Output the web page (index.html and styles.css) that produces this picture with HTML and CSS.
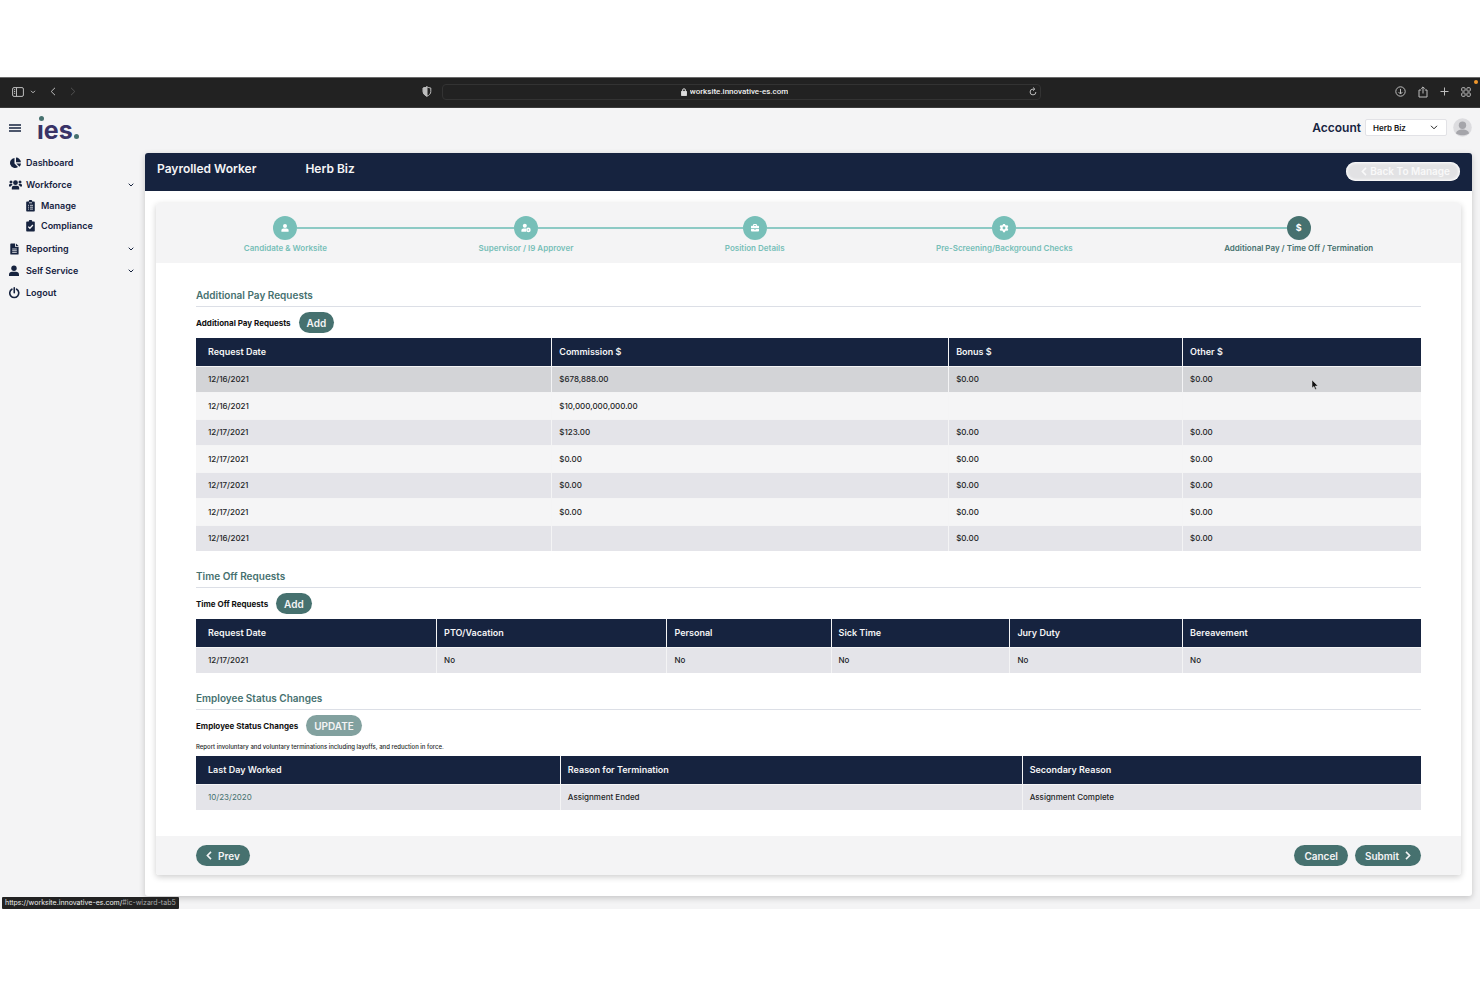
FILE: index.html
```html
<!DOCTYPE html>
<html lang="en">
<head>
<meta charset="utf-8">
<title>Payrolled Worker – Herb Biz</title>
<link rel="stylesheet" href="styles.css">
</head>
<body>
<div class="window">
  <header class="browser">
    <div class="browser-side">
      <button class="tool" aria-label="Show sidebar"><svg width="12" height="10" viewBox="0 0 12 10"><rect x=".6" y=".6" width="10.8" height="8.8" rx="1.4"/><path d="M4.5 .6v8.800M2 2.700h1.200M2 4.500h1.200M2 6.300h1.200"/></svg></button>
      <button class="tool tool-menu" aria-label="Tab groups"><svg width="6" height="4" viewBox="0 0 6 4"><path d="M1 .8l2 2 2-2"/></svg></button>
      <button class="tool tool-back" aria-label="Back"><svg width="6" height="9" viewBox="0 0 6 9"><path d="M5 .8L1.200 4.500 5 8.200"/></svg></button>
      <button class="tool tool-forward" aria-label="Forward" disabled><svg width="6" height="9" viewBox="0 0 6 9"><path d="M1 .8l3.800 3.700L1 8.200"/></svg></button>
      <button class="tool tool-shield" aria-label="Privacy report"><svg width="10" height="11" viewBox="0 0 10 11"><path d="M5 .8C3.800 1.600 2.600 1.900 1.200 2v3.500C1.200 7.800 2.800 9.300 5 10.200 7.200 9.300 8.800 7.800 8.800 5.500V2C7.400 1.900 6.200 1.600 5 .8z"/><path class="solid" d="M5 .8C3.800 1.600 2.600 1.900 1.200 2v3.500C1.200 7.800 2.800 9.300 5 10.200z"/></svg></button>
    </div>
    <label class="address">
      <svg class="lock" width="6" height="8" viewBox="0 0 6 8"><rect class="solid" x=".3" y="3.300" width="5.400" height="4.300" rx=".7"/><path d="M1.500 3.500V2.300a1.500 1.500 0 013 0v1.200"/></svg>
      <input class="address-input" type="text" value="worksite.innovative-es.com" size="26" aria-label="Address">
      <button class="tool reload" aria-label="Reload"><svg width="8" height="9" viewBox="0 0 8 9"><path d="M6.900 5A2.900 2.900 0 114 2.100h1.500M4.100.5l1.700 1.600-1.700 1.600"/></svg></button>
    </label>
    <div class="browser-side browser-end">
      <button class="tool" aria-label="Downloads"><svg width="11" height="11" viewBox="0 0 11 11"><circle cx="5.500" cy="5.500" r="4.700"/><path d="M5.500 2.900v5M3.600 6.100l1.900 1.900 1.900-1.900"/></svg></button>
      <button class="tool" aria-label="Share"><svg width="10" height="12" viewBox="0 0 10 12"><path d="M3.200 4H1v7h8V4H6.800M5 7.500V1M3.200 2.700L5 .9l1.800 1.800"/></svg></button>
      <button class="tool" aria-label="New tab"><svg width="9" height="9" viewBox="0 0 9 9"><path d="M4.500.5v8M.5 4.500h8"/></svg></button>
      <button class="tool" aria-label="Tab overview"><svg width="10" height="10" viewBox="0 0 10 10"><rect x=".7" y=".7" width="3.400" height="3.400" rx=".8"/><rect x="5.900" y=".7" width="3.400" height="3.400" rx=".8"/><rect x=".7" y="5.900" width="3.400" height="3.400" rx=".8"/><rect x="5.900" y="5.900" width="3.400" height="3.400" rx=".8"/></svg></button>
    </div>
    <span class="recording"></span>
  </header>

  <div class="app">
    <header class="topbar">
      <button class="burger" aria-label="Toggle menu"><svg width="12" height="8" viewBox="0 0 12 8"><path d="M0 1h12M0 4h12M0 7h12"/></svg></button>
      <a class="logo" href="#" aria-label="ies">&#305;es<span class="logo-stop"></span><span class="logo-dot"></span></a>
      <label class="account-label" for="account">Account</label>
      <span class="select-wrap">
        <select id="account" class="account"><option>Herb Biz</option></select>
        <svg class="select-arrow" width="8" height="5" viewBox="0 0 8 5"><path d="M1 .8l3 3 3-3"/></svg>
      </span>
      <svg class="avatar" width="19" height="19" viewBox="0 0 19 19"><circle cx="9.500" cy="9.500" r="9.300" fill="#dcdcdf"/><circle cx="9.500" cy="7.200" r="3.700" fill="#a5a5aa"/><path d="M3 15.500c.5-3 3-4 6.500-4s6 1 6.500 4c-3.500 2.400-9.500 2.400-13 0z" fill="#a5a5aa"/></svg>
    </header>

    <nav class="sidebar">
      <a class="nav-item" href="#"><svg class="nav-icon" viewBox="0 0 13 12"><path d="M5.500 1A5 5 0 109 10L5.500 6.500z"/><path d="M7 .5v4.800h4.900A5 5 0 007 .5z"/><path d="M7.300 6.500l3.200 3.200a5 5 0 001.500-3.200z"/></svg>Dashboard</a>
      <a class="nav-item" href="#"><svg class="nav-icon" viewBox="0 0 13 12"><circle cx="6.500" cy="3.700" r="2.400"/><circle cx="2" cy="3" r="1.500"/><circle cx="11" cy="3" r="1.500"/><path d="M2.800 10.500V9c0-1.500 1-2.300 2.200-2.300h3c1.200 0 2.200.8 2.200 2.300v1.500zM0 7.500V6.300C0 5.500.6 5 1.400 5h1.400l.9 1c-1 .3-1.500.8-1.700 1.500zM13 7.500V6.300c0-.8-.6-1.300-1.400-1.300h-1.400l-.9 1c1 .3 1.500.8 1.700 1.500z"/></svg>Workforce<svg class="nav-arrow" viewBox="0 0 6 4"><path d="M.7.7L3 3 5.300.7"/></svg></a>
      <a class="nav-item nav-sub" href="#"><svg class="nav-icon" viewBox="0 0 13 12"><path d="M3.200 1.500h1.600a1.700 1.700 0 013.400 0h1.600c.6 0 1 .4 1 1v8c0 .6-.4 1-1 1H3.200c-.6 0-1-.4-1-1v-8c0-.6.400-1 1-1z"/><path class="cut" d="M5 2.800h3M4 5.300h1M6 5.300h3M4 7.200h1M6 7.200h3M4 9.100h1M6 9.100h3"/></svg>Manage</a>
      <a class="nav-item nav-sub" href="#"><svg class="nav-icon" viewBox="0 0 13 12"><path d="M3.200 1.500h1.600a1.700 1.700 0 013.400 0h1.600c.6 0 1 .4 1 1v8c0 .6-.4 1-1 1H3.200c-.6 0-1-.4-1-1v-8c0-.6.400-1 1-1z"/><path class="cut cut-bold" d="M4.300 6.600l1.600 1.700 3-3.300"/></svg>Compliance</a>
      <a class="nav-item nav-after" href="#"><svg class="nav-icon" viewBox="0 0 13 12"><path d="M2 .5h4v3.300h3.600v7.200c0 .4-.3.600-.6.600H2c-.4 0-.7-.3-.7-.7V1.200c0-.4.300-.7.700-.7z"/><path d="M6.900.6l2.700 2.500H6.900z"/><path class="cut" d="M3.200 6h4.600M3.200 7.700h4.600M3.200 9.400h4.600"/></svg>Reporting<svg class="nav-arrow" viewBox="0 0 6 4"><path d="M.7.7L3 3 5.300.7"/></svg></a>
      <a class="nav-item" href="#"><svg class="nav-icon" viewBox="0 0 13 12"><circle cx="5" cy="3.200" r="2.700"/><path d="M0 11V9.500C0 7.700 1.300 6.800 3 6.800h4c1.700 0 3 .9 3 2.700V11z"/></svg>Self Service<svg class="nav-arrow" viewBox="0 0 6 4"><path d="M.7.7L3 3 5.300.7"/></svg></a>
      <a class="nav-item" href="#"><svg class="nav-icon" viewBox="0 0 13 12"><path class="line" d="M2.900 2.200a4.500 4.500 0 104.700 0M5.250 .8v5"/></svg>Logout</a>
    </nav>

    <main class="panel">
      <header class="panel-head">
        <h1 class="panel-title">Payrolled Worker</h1>
        <span class="panel-title">Herb Biz</span>
        <button class="back"><svg class="chev" width="6" height="9" viewBox="0 0 6 9"><path d="M5 .9L1.400 4.500 5 8.100"/></svg>Back To Manage</button>
      </header>

      <section class="wizard">
        <ol class="steps">
          <li class="step"><span class="step-row"><span class="step-dot"><svg width="10" height="10" viewBox="0 0 10 10"><circle cx="5" cy="3" r="2"/><path d="M1.400 8.800V7.500c0-1.200.9-1.900 2-1.900h3.200c1.100 0 2 .7 2 1.900v1.300z"/></svg></span></span><span class="step-label">Candidate &amp; Worksite</span></li>
          <li class="step"><span class="step-row"><span class="step-dot"><svg width="10" height="10" viewBox="0 0 10 10"><circle cx="3.800" cy="2.800" r="2"/><path d="M.4 8.800V7.500c0-1.200.9-1.900 2-1.900H5v3.200z"/><circle cx="7.400" cy="6.900" r="2.300"/><circle cx="7.400" cy="6.900" r=".7" fill="#77bfb8"/></svg></span></span><span class="step-label">Supervisor / I9 Approver</span></li>
          <li class="step"><span class="step-row"><span class="step-dot"><svg width="10" height="10" viewBox="0 0 10 10"><path d="M1.800 2.800h1.300V1.900c0-.5.300-.8.800-.8h2.200c.5 0 .8.300.8.800v.9h1.300c.5 0 .8.300.8.800v1.700H1V3.600c0-.5.300-.8.800-.8zM4 2.800h2V2H4zM1 5.900h3v.7h2v-.7h3v1.900c0 .5-.3.800-.8.800H1.800c-.5 0-.8-.3-.8-.8z" fill-rule="evenodd"/></svg></span></span><span class="step-label">Position Details</span></li>
          <li class="step"><span class="step-row"><span class="step-dot"><svg width="10" height="10" viewBox="0 0 10 10"><path fill-rule="evenodd" d="M4 .9h2l.3 1.200.8.400 1.200-.4 1 1.700-.9.900v.7l.9.900-1 1.700-1.200-.4-.8.400L6 9.200H4L3.700 8l-.8-.4-1.200.4-1-1.700.9-.9v-.7l-.9-.9 1-1.700 1.200.4.800-.4zM5 3.600a1.450 1.450 0 100 2.900 1.450 1.450 0 000-2.900z"/></svg></span></span><span class="step-label">Pre-Screening/Background Checks</span></li>
          <li class="step step-current"><span class="step-row"><span class="step-dot">$</span></span><span class="step-label">Additional Pay / Time Off / Termination</span></li>
        </ol>

        <div class="wizard-body">
          <section class="block">
            <h2 class="block-title">Additional Pay Requests</h2>
            <div class="block-tools"><span class="block-name">Additional Pay Requests</span><button class="pill">Add</button></div>
            <table class="grid pay">
              <colgroup><col class="p1"><col class="p2"><col class="p3"><col class="p4"></colgroup>
              <thead><tr><th>Request Date</th><th>Commission $</th><th>Bonus $</th><th>Other $</th></tr></thead>
              <tbody>
                <tr class="hovered"><td>12/16/2021</td><td>$678,888.00</td><td>$0.00</td><td>$0.00</td></tr>
                <tr><td>12/16/2021</td><td>$10,000,000,000.00</td><td></td><td></td></tr>
                <tr><td>12/17/2021</td><td>$123.00</td><td>$0.00</td><td>$0.00</td></tr>
                <tr><td>12/17/2021</td><td>$0.00</td><td>$0.00</td><td>$0.00</td></tr>
                <tr><td>12/17/2021</td><td>$0.00</td><td>$0.00</td><td>$0.00</td></tr>
                <tr><td>12/17/2021</td><td>$0.00</td><td>$0.00</td><td>$0.00</td></tr>
                <tr><td>12/16/2021</td><td></td><td>$0.00</td><td>$0.00</td></tr>
              </tbody>
            </table>
          </section>

          <section class="block">
            <h2 class="block-title">Time Off Requests</h2>
            <div class="block-tools"><span class="block-name">Time Off Requests</span><button class="pill">Add</button></div>
            <table class="grid off">
              <colgroup><col class="o1"><col class="o2"><col class="o3"><col class="o4"><col class="o5"><col class="o6"></colgroup>
              <thead><tr><th>Request Date</th><th>PTO/Vacation</th><th>Personal</th><th>Sick Time</th><th>Jury Duty</th><th>Bereavement</th></tr></thead>
              <tbody><tr><td>12/17/2021</td><td>No</td><td>No</td><td>No</td><td>No</td><td>No</td></tr></tbody>
            </table>
          </section>

          <section class="block">
            <h2 class="block-title">Employee Status Changes</h2>
            <div class="block-tools"><span class="block-name">Employee Status Changes</span><button class="pill" disabled>UPDATE</button></div>
            <p class="note">Report involuntary and voluntary terminations including layoffs, and reduction in force.</p>
            <table class="grid status">
              <colgroup><col class="s1"><col class="s2"><col class="s3"></colgroup>
              <thead><tr><th>Last Day Worked</th><th>Reason for Termination</th><th>Secondary Reason</th></tr></thead>
              <tbody><tr><td><a class="date-link" href="#">10/23/2020</a></td><td>Assignment Ended</td><td>Assignment Complete</td></tr></tbody>
            </table>
          </section>
        </div>

        <footer class="wizard-foot">
          <button class="pill"><svg class="chev" width="6" height="9" viewBox="0 0 6 9"><path d="M5 .9L1.400 4.500 5 8.100"/></svg>Prev</button>
          <button class="pill foot-cancel">Cancel</button>
          <button class="pill">Submit<svg class="chev" width="6" height="9" viewBox="0 0 6 9"><path d="M1 .9l3.600 3.600L1 8.100"/></svg></button>
        </footer>
      </section>
    </main>
    <div class="status-url">https://worksite.innovative-es.com/<span class="status-hash">#ic-wizard-tab5</span></div>
  </div>
  <svg class="pointer" width="8" height="12" viewBox="0 0 8 12"><path d="M1 1v8l1.900-1.600L4.200 10.500l1.300-.6-1.300-2.900H7z"/></svg>
</div>
</body>
</html>
```
FILE: styles.css
```css
* { box-sizing: border-box; }

body {
  margin: 0;
  padding: 77px 0;
  background: #fff;
  color: #1d1f26;
  font-family: Inter, "Liberation Sans", sans-serif;
  font-size: 8px;
  line-height: 16px;
}

button, input, select { font: inherit; color: inherit; }
button { border: 0; padding: 0; background: none; cursor: pointer; }
a { color: inherit; text-decoration: none; }
svg { flex: none; display: block; }
.window { position: relative; }

/* Browser toolbar */
.browser {
  position: relative;
  display: grid;
  grid-template-columns: 1fr 41% 1fr;
  align-items: center;
  height: 31px;
  padding: 0 9px 2px 12px;
  background: #222;
  border-top: 1px solid #6a6a6a;
  border-bottom: 1px solid #3a3a3a;
}
.browser svg { fill: none; stroke: #bdbdbd; stroke-width: 1; }
.browser svg .solid { fill: #bdbdbd; }
.browser-side { display: flex; align-items: center; }
.browser-end { justify-content: flex-end; gap: 12px; }
.tool-menu { margin-left: 6px; }
.tool-back { margin-left: 14px; }
.tool-forward { margin-left: 14px; opacity: .3; }
.tool-shield { margin: 0 10px 0 auto; }
.address {
  display: flex;
  align-items: center;
  justify-content: center;
  gap: 3px;
  height: 16px;
  padding-right: 3px;
  border: 1px solid #333;
  border-radius: 4px;
}
.address .lock { margin-left: auto; }
.address .lock .solid, .address .lock { stroke: #ddd; fill: #ddd; }
.address .lock path { fill: none; }
.address-input {
  field-sizing: content;
  padding: 0;
  border: 0;
  outline: 0;
  background: none;
  color: #eee;
  font-family: Roboto, sans-serif;
  font-size: 8px;
  font-weight: 500;
  line-height: 12px;
}
.reload { margin-left: auto; }
.recording { position: absolute; top: 2px; right: 2px; width: 4px; height: 4px; border-radius: 50%; background: #f0982c; }

/* App frame */
.app {
  position: relative;
  display: grid;
  grid-template-columns: 145px 1fr;
  grid-template-rows: 45px auto;
  padding: 0 8px 13px 0;
  background: #f4f4f5;
}
.topbar {
  grid-column: 1 / -1;
  display: flex;
  align-items: center;
  padding: 0 0 6px 9px;
  color: #16233f;
}
.burger svg { stroke: #16233f; stroke-width: 1.6; }
.logo {
  position: relative;
  display: flex;
  align-items: baseline;
  margin: 5px auto 0 16px;
  color: #393367;
  font-size: 25px;
  font-weight: 700;
  line-height: 28px;
}
.logo-stop { width: 5px; height: 5px; margin-left: 1px; border-radius: 50%; background: #46716f; }
.logo-dot { position: absolute; left: 2px; top: 0; width: 5px; height: 5px; border-radius: 50%; background: #46716f; }
.account-label { margin-right: 4px; font-size: 12px; font-weight: 600; }
.select-wrap { position: relative; display: flex; margin-right: 6px; }
.account {
  appearance: none;
  width: 82px;
  height: 17px;
  padding: 0 7px;
  border: 1px solid #e2e2e6;
  border-radius: 2px;
  background: #fff;
  color: #111;
  font-weight: 600;
  line-height: 14px;
}
.select-arrow { position: absolute; right: 9px; top: 6px; fill: none; stroke: #222; pointer-events: none; }

/* Sidebar */
.sidebar { display: flex; flex-direction: column; color: #16233f; font-size: 9px; font-weight: 600; }
.nav-item { display: flex; align-items: center; height: 22px; padding: 0 11px 2px 9px; }
.nav-icon { width: 13px; height: 12px; margin-right: 4px; fill: currentColor; }
.nav-icon .cut { fill: none; stroke: #f4f4f5; stroke-width: .8; }
.nav-icon .cut-bold { stroke-width: 1.3; }
.nav-icon .line { fill: none; stroke: currentColor; stroke-width: 1.6; stroke-linecap: round; }
.nav-arrow { width: 6px; height: 4px; margin-left: auto; fill: none; stroke: #16233f; }
.nav-sub { height: 20px; padding-left: 24px; }
.nav-after { margin-top: 2px; }

/* Panel */
.panel { background: #fff; border-radius: 3px; box-shadow: 0 2px 6px rgba(0, 0, 0, .2); padding-bottom: 21px; }
.panel-head {
  display: flex;
  align-items: center;
  gap: 49px;
  height: 38px;
  padding: 0 12px;
  border-radius: 3px 3px 0 0;
  background: #16233f;
  color: #f4f4f5;
}
.panel-title { margin: 0 0 6px; font-size: 12px; font-weight: 600; line-height: 16px; }
.back {
  display: flex;
  align-items: center;
  justify-content: flex-end;
  gap: 3px;
  height: 19px;
  margin: 0 0 2px auto;
  padding: 0 10px 0 15px;
  border-radius: 10px;
  background: #e2e2e4;
  box-shadow: inset 0 0 3px 1px #fff;
  color: #f9f9f9;
  font-size: 10px;
  font-weight: 600;
}
.chev { fill: none; stroke: currentColor; stroke-width: 1.6; }

.wizard { margin: 12px 11px 0; border-radius: 3px; box-shadow: 0 2px 6px rgba(0, 0, 0, .2); }
.steps {
  display: flex;
  margin: 0;
  padding: 13px 12px 7px;
  list-style: none;
  border-radius: 3px 3px 0 0;
  background: #f4f4f5;
}
.step { flex: 1 1 auto; color: #77bfb8; text-align: center; font-weight: 600; }
.step-row { display: flex; align-items: center; }
.step-row::before, .step-row::after { content: ""; flex: 1; height: 2px; background: #8dcac5; }
.step:first-child .step-row::before, .step:last-child .step-row::after { background: none; }
.step-dot {
  display: flex;
  align-items: center;
  justify-content: center;
  width: 24px;
  height: 24px;
  border-radius: 50%;
  background: #77bfb8;
  color: #fff;
  font-size: 9px;
  font-weight: 700;
}
.step-dot svg { fill: #fff; }
.step-label { display: block; font-size: 8px; white-space: nowrap; }
.step-current { color: #46716f; }
.step-current .step-dot { background: #46716f; }

.wizard-body { padding: 24px 40px 26px; }
.block + .block { margin-top: 17px; }
.block-title {
  margin: 0;
  padding-bottom: 3px;
  border-bottom: 1px solid #dcdfe6;
  color: #46716f;
  font-size: 10px;
  font-weight: 600;
  line-height: 16px;
}
.block-tools { display: flex; align-items: center; gap: 8px; padding: 5px 0; }
.block-name { font-weight: 700; color: #111; }
.pill {
  display: flex;
  align-items: center;
  gap: 6px;
  height: 21px;
  padding: 0 8px;
  border-radius: 11px;
  background: #46716f;
  color: #f4f4f5;
  font-size: 10px;
  font-weight: 600;
}
.pill:disabled { background: #82a19f; }
.note { margin: 0 0 3px; font-size: 6px; font-weight: 500; line-height: 12px; }

.grid { width: 100%; table-layout: fixed; border-collapse: separate; border-spacing: 0; text-align: left; }
.grid th { padding: 6px 7px; background: #16233f; color: #f4f4f5; font-size: 9px; font-weight: 600; }
.grid td { height: 26px; padding: 5px 7px; background: #e4e4e9; font-weight: 500; line-height: 15px; border-top: 1px solid #f4f4f5; }
.grid tbody tr:nth-child(even) td { height: 27px; background: #f5f5f6; }
.grid .hovered td { background: #d3d4d7; }
.grid th:first-child, .grid td:first-child { padding-left: 12px; }
.grid th + th, .grid td + td { border-left: 1px solid #f4f4f5; }
.date-link { color: #46716f; font-weight: 400; }
.p1 { width: 29%; } .p2 { width: 32.4%; } .p3 { width: 19.1%; } .p4 { width: 19.5%; }
.o1 { width: 19.6%; } .o2 { width: 18.8%; } .o3 { width: 13.4%; } .o4 { width: 14.6%; } .o5 { width: 14.1%; } .o6 { width: 19.5%; }
.s1 { width: 29.7%; } .s2 { width: 37.7%; } .s3 { width: 32.6%; }

.wizard-foot {
  display: flex;
  align-items: center;
  gap: 7px;
  padding: 9px 40px;
  border-radius: 0 0 3px 3px;
  background: #f4f4f5;
}
.wizard-foot .pill { padding: 0 10px; }
.foot-cancel { margin-left: auto; }

/* Overlays */
.status-url {
  position: absolute;
  left: 2px;
  bottom: 0;
  padding: 0 3px;
  border-radius: 1px;
  background: #222;
  color: #eee;
  font-size: 7px;
  line-height: 12px;
}
.status-hash { color: #aaa; }
.pointer { position: absolute; left: 1311px; top: 302px; fill: #111; stroke: #ddd; stroke-width: .5; }
```
